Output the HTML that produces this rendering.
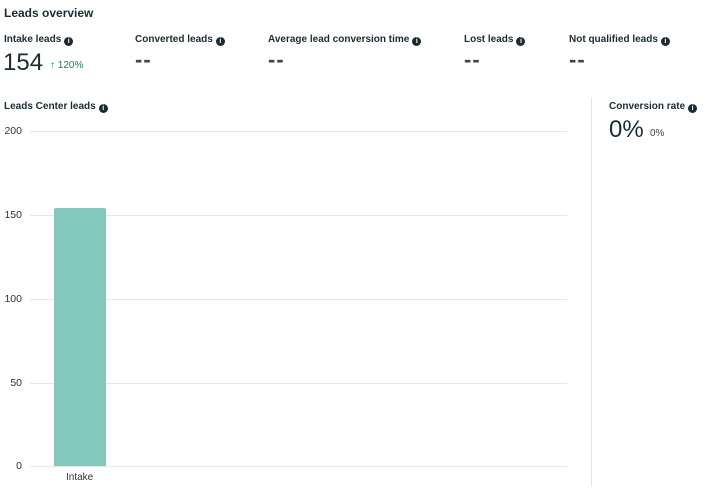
<!DOCTYPE html>
<html><head><style>
body{margin:0;width:709px;height:491px;background:#fff;font-family:"Liberation Sans",sans-serif;color:#1c2b33;position:relative;overflow:hidden}
.a{position:absolute;white-space:nowrap}
.t{font-size:12px;font-weight:bold}
.l{font-size:10px;font-weight:bold}
.i{display:inline-block;width:9px;height:9px;border-radius:50%;background:#1c2b33;color:#fff;font-size:7px;line-height:9px;text-align:center;vertical-align:-1px;margin-left:3px;font-weight:bold}
.n{font-size:24px}
.d{font-size:22px;color:#444;letter-spacing:1px;font-weight:bold}
.g{position:absolute;left:30px;width:537px;height:1px;background:#e6e6e6}
.y{position:absolute;font-size:10.5px;color:#333;width:22px;text-align:right;left:0}
</style></head><body>
<div class="a t" style="left:4px;top:6px">Leads overview</div>
<div class="a l" style="left:4px;top:34px">Intake leads<span class="i">i</span></div>
<div class="a l" style="left:135px;top:34px">Converted leads<span class="i">i</span></div>
<div class="a l" style="left:268px;top:34px">Average lead conversion time<span class="i">i</span></div>
<div class="a l" style="left:464px;top:34px">Lost leads<span class="i">i</span></div>
<div class="a l" style="left:569px;top:34px">Not qualified leads<span class="i">i</span></div>
<div class="a n" style="left:3px;top:49px">154</div>
<div class="a" style="left:50px;top:60px;font-size:10px;color:#1e7d52">↑ 120%</div>
<div class="a d" style="left:135px;top:47px">--</div>
<div class="a d" style="left:268px;top:47px">--</div>
<div class="a d" style="left:464px;top:47px">--</div>
<div class="a d" style="left:569px;top:47px">--</div>
<div class="a l" style="left:4px;top:101px">Leads Center leads<span class="i">i</span></div>
<div class="a l" style="left:609px;top:101px">Conversion rate<span class="i">i</span></div>
<div class="a n" style="left:609px;top:116px">0%</div>
<div class="a" style="left:650px;top:128px;font-size:10px;color:#444">0%</div>
<div style="position:absolute;left:591px;top:98px;width:1px;height:388px;background:#e3e3e3"></div>
<div class="g" style="top:131px"></div><div class="y" style="top:125px">200</div>
<div class="g" style="top:215px"></div><div class="y" style="top:209px">150</div>
<div class="g" style="top:299px"></div><div class="y" style="top:293px">100</div>
<div class="g" style="top:383px"></div><div class="y" style="top:377px">50</div>
<div class="g" style="top:466px"></div><div class="y" style="top:460px">0</div>
<div style="position:absolute;left:54px;top:208px;width:52px;height:258px;background:#84c8bd;border-radius:2px 2px 0 0"></div>
<div class="a" style="left:66px;top:472px;font-size:10px;color:#333">Intake</div>
</body></html>
